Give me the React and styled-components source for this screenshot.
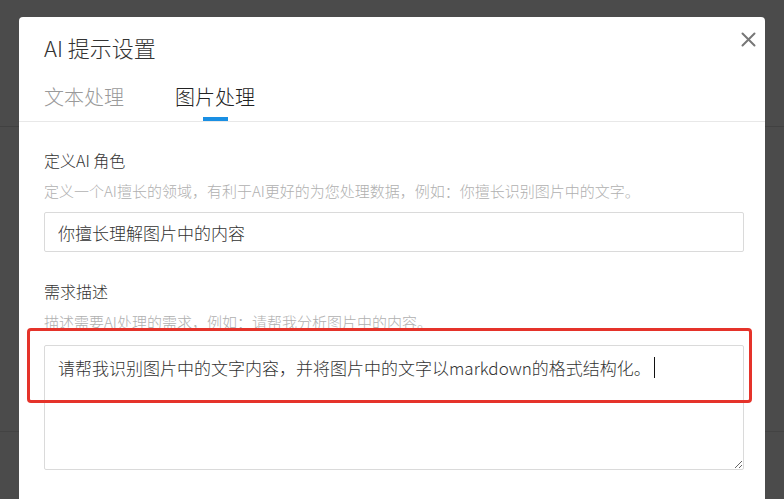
import { useEffect, useRef } from "react";
import styled, { createGlobalStyle } from "styled-components";

const GlobalStyles = createGlobalStyle`
  html, body { margin: 0; padding: 0; }
  body {
    background: #4b4b4b;
    overflow: hidden;
    font-family: "Noto Sans CJK SC", "Noto Sans", sans-serif;
    font-weight: 300;
  }
  * { box-sizing: border-box; }
`;

const ROLE_TEXT = "你擅长理解图片中的内容";
const NEED_TEXT = "请帮我识别图片中的文字内容，并将图片中的文字以markdown的格式结构化。";

function App() {
  const areaRef = useRef(null);

  useEffect(() => {
    const el = areaRef.current;
    if (!el) return;
    el.focus();
    el.setSelectionRange(NEED_TEXT.length, NEED_TEXT.length);
  }, []);

  return (
    <>
      <GlobalStyles />
      <BehindPage>
        <BehindHeader />
        <BehindBody />
      </BehindPage>

      <Overlay>
        <Dialog role="dialog" aria-label="AI 提示设置">
          <Header>
            <Title>AI 提示设置</Title>
            <CloseButton aria-label="关闭">
              <svg width="15" height="15" viewBox="0 0 15 15" aria-hidden="true">
                <path d="M1.5 1.5 L13.5 13.5 M13.5 1.5 L1.5 13.5" stroke="#777" strokeWidth="2" strokeLinecap="round" />
              </svg>
            </CloseButton>
          </Header>

          <TabBar>
            <Tab>文本处理</Tab>
            <Tab $active>图片处理</Tab>
          </TabBar>

          <Body>
            <Field>
              <Label>定义AI 角色</Label>
              <Hint>定义一个AI擅长的领域，有利于AI更好的为您处理数据，例如：你擅长识别图片中的文字。</Hint>
              <Input defaultValue={ROLE_TEXT} />
            </Field>

            <Field>
              <Label>需求描述</Label>
              <Hint>描述需要AI处理的需求，例如：请帮我分析图片中的内容。</Hint>
              <AreaWrap>
                <TextArea ref={areaRef} defaultValue={NEED_TEXT} />
                <Caret aria-hidden="true" />
                <Highlight aria-hidden="true" />
              </AreaWrap>
            </Field>
          </Body>
        </Dialog>
      </Overlay>
    </>
  );
}

export default App;

/* page behind the mask */
const BehindPage = styled.div`
  height: 100vh;
  display: flex;
  flex-direction: column;
`;
const BehindHeader = styled.div`
  height: 127px;
  border-bottom: 1px solid #414141;
`;
const BehindBody = styled.div`
  height: 305px;
  border-bottom: 1px solid #434343;
`;

/* dialog */
const Overlay = styled.div`
  position: fixed;
  inset: 0;
  padding: 17px 19px 0 19px;
`;
const Dialog = styled.div`
  position: relative;
  width: 746px;
  height: 540px;
  background: #fff;
  border-radius: 4px;
`;
const Header = styled.div`
  padding: 15px 25px 0 25px;
`;
const Title = styled.h2`
  margin: 0;
  font-size: 22px;
  line-height: 30px;
  font-weight: 300;
  color: #333;
`;
const CloseButton = styled.button`
  position: absolute;
  top: 15px;
  right: 9px;
  width: 15px;
  height: 15px;
  padding: 0;
  border: 0;
  background: none;
  display: flex;
  cursor: pointer;
`;
const TabBar = styled.div`
  display: flex;
  gap: 51px;
  margin-top: 21px;
  padding: 0 25px;
  border-bottom: 1px solid #e8e8e8;
`;
const Tab = styled.div`
  position: relative;
  font-size: 20px;
  line-height: 28px;
  padding-bottom: 10px;
  color: ${({ $active }) => ($active ? "#222" : "#9a9a9a")};
  &::after {
    content: "";
    display: ${({ $active }) => ($active ? "block" : "none")};
    position: absolute;
    left: 50%;
    bottom: 0;
    width: 25px;
    height: 4px;
    margin-left: -12.5px;
    background: #1a8fe3;
  }
`;
const Body = styled.div`
  display: flex;
  flex-direction: column;
  gap: 27px;
  padding: 26px 21px 0 25px;
`;
const Field = styled.div`
  display: flex;
  flex-direction: column;
`;
const Label = styled.div`
  font-size: 16px;
  line-height: 24px;
  color: #333;
`;
const Hint = styled.div`
  margin: 8px 0 10px;
  font-size: 15px;
  line-height: 22px;
  color: #b0b0b0;
  white-space: nowrap;
`;
const Input = styled.input`
  height: 40px;
  padding: 0 13px;
  border: 1px solid #dadada;
  border-radius: 2px;
  font-family: inherit;
  font-weight: 300;
  font-size: 17px;
  color: #333;
  outline: none;
`;
const AreaWrap = styled.div`
  position: relative;
  display: flex;
`;
const TextArea = styled.textarea`
  flex: 1;
  height: 125px;
  margin-top: 2px;
  padding: 10px 13px;
  border: 1px solid #dadada;
  border-radius: 2px;
  font-family: inherit;
  font-weight: 300;
  font-size: 17px;
  line-height: 24px;
  color: #333;
  caret-color: #000;
  outline: none;
  resize: vertical;
`;
const Caret = styled.div`
  position: absolute;
  top: 14px;
  left: 610px;
  width: 1px;
  height: 21px;
  background: #111;
  pointer-events: none;
`;
const Highlight = styled.div`
  position: absolute;
  top: -15px;
  left: -17px;
  right: -8px;
  height: 75px;
  border: 3px solid #e5332a;
  border-radius: 4px;
  pointer-events: none;
`;
